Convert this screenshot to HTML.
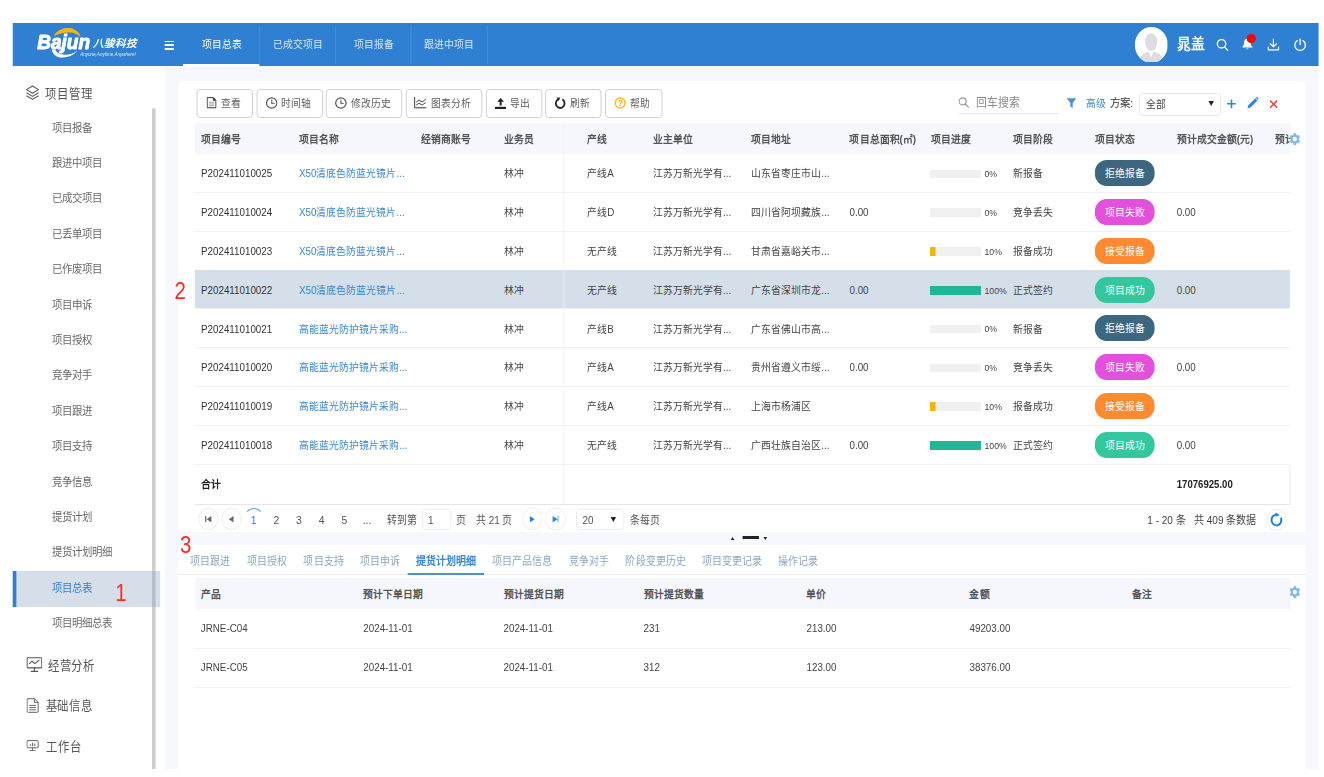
<!DOCTYPE html>
<html lang="zh-CN"><head><meta charset="utf-8"><title>项目总表</title><style>
*{box-sizing:border-box;margin:0;padding:0}
html,body{width:1324px;height:777px;overflow:hidden;background:#fff}
#root{position:absolute;left:0;top:0;width:1454.95px;height:777px;transform:scaleX(0.91);transform-origin:0 0;font-family:"Liberation Sans",sans-serif;font-size:10.77px;color:#333}

.a{position:absolute}
.t{position:absolute;white-space:nowrap;line-height:14px;height:14px;margin-top:-7px}
.b{font-weight:bold}
.hd{left:14.29px;top:23px;width:1435.16px;height:43px;background:#2f80d3}
.sb{left:14.29px;top:66px;width:167.03px;height:703px;background:#fff}
.mainbg{left:181.32px;top:66px;width:1268.13px;height:703px;background:#f6f8fd}
.card1{left:196.15px;top:80.5px;width:1239.01px;height:451.2px;background:#fff;border-radius:6px 6px 0 0}
.card2{left:196.15px;top:545px;width:1239.01px;height:224px;background:#fff}
.btn{position:absolute;top:89px;height:29px;border:1px solid #cfcfcf;border-radius:4px;background:#fff}
.th{color:#555;font-weight:bold}
.lnk{color:#3a86d0}
.hline{position:absolute;height:1px;background:#f0f1f4}
.badge{position:absolute;left:1203.3px;width:65.27px;height:26px;border-radius:13px;color:#fff;text-align:center;line-height:26px;font-size:10.77px}
.pbar{position:absolute;left:1022.42px;width:55.16px;height:8.6px;background:#f0f0f0}
.pfill{position:absolute;left:0;top:0;height:100%}
.circ{position:absolute;width:22.42px;height:22.6px;border-radius:50%;border:1px solid #efefef;background:#fff}
.mi{color:#686868;font-size:11.43px}
.mh{color:#555;font-size:12.53px}
.tab2{color:#8ea6c2;font-size:10.99px}
.red{color:#ff2a22;font-size:24.18px;line-height:24px;height:24px;margin-top:-11.5px;transform:translateX(-50%) scaleX(.93)}
</style></head>
<body>
<div id="root">
<div class="a hd"></div>
<div class="a sb"></div>
<div class="a mainbg"></div>
<div class="a card1"></div>
<div class="a card2"></div>
<svg class="a" preserveAspectRatio="none" style="left:32.97px;top:25px" width="131.87" height="40" viewBox="0 0 120 40">
<path d="M23.6 11 C27.5 4.2 34 2.6 39 3 C45.5 3.6 49.6 7.4 50.6 12.2 C47.6 8.6 43.4 7.2 38.6 7.4 C32.6 7.6 27.4 9 23.6 11 Z" fill="#f5b70c"/>
<path d="M21.8 24.6 C22.6 30.4 27.6 33 33 32.6 C39.4 32.2 44.6 29.4 47.4 25.8 C43.6 28.6 39 30 34.6 29.8 C30 29.6 26.6 27.8 25.2 24.6 Z" fill="#fff"/>
<text x="7.2" y="23.6" font-family="Liberation Sans, sans-serif" font-size="20.4" font-weight="bold" font-style="italic" fill="#fff" stroke="#fff" stroke-width="1" stroke-linejoin="round" textLength="52.8" lengthAdjust="spacingAndGlyphs">Bajun</text>
<text x="62.8" y="22.4" font-family="Liberation Sans, sans-serif" font-size="10.6" font-weight="normal" font-style="italic" fill="#fff" stroke="#fff" stroke-width=".35" textLength="44.4" lengthAdjust="spacingAndGlyphs">八骏科技</text>
<text x="50.3" y="31.3" font-family="Liberation Sans, sans-serif" font-size="4.9" font-style="italic" fill="#dcebfa" textLength="55.4" lengthAdjust="spacingAndGlyphs">Anyone,Anytime,Anywhere!</text>
</svg>
<div class="a" style="left:180.55px;top:40.6px;width:10.44px;height:1.4px;background:#fff"></div>
<div class="a" style="left:180.55px;top:44.4px;width:10.44px;height:1.4px;background:#fff"></div>
<div class="a" style="left:180.55px;top:48.2px;width:10.44px;height:1.4px;background:#fff"></div>
<div class="t " style="left:221.65px;top:44.4px;color:rgba(255,255,255,1);font-size:10.77px">项目总表</div>
<div class="t " style="left:299.67px;top:44.4px;color:rgba(255,255,255,0.82);font-size:10.77px">已成交项目</div>
<div class="t " style="left:388.68px;top:44.4px;color:rgba(255,255,255,0.82);font-size:10.77px">项目报备</div>
<div class="t " style="left:465.6px;top:44.4px;color:rgba(255,255,255,0.82);font-size:10.77px">跟进中项目</div>
<div class="a" style="left:284.62px;top:25px;width:1.1px;height:39px;background:rgba(255,255,255,.12)"></div>
<div class="a" style="left:368.13px;top:25px;width:1.1px;height:39px;background:rgba(255,255,255,.12)"></div>
<div class="a" style="left:451.1px;top:25px;width:1.1px;height:39px;background:rgba(255,255,255,.12)"></div>
<div class="a" style="left:534.62px;top:25px;width:1.1px;height:39px;background:rgba(255,255,255,.12)"></div>
<div class="a" style="left:201.1px;top:63.8px;width:83.52px;height:2.2px;background:#fff"></div>
<svg class="a" preserveAspectRatio="none" style="left:1247.03px;top:26.5px" width="36.48" height="35.8" viewBox="0 0 33.2 35.8">
<defs><clipPath id="av"><ellipse cx="16.6" cy="17.9" rx="16.6" ry="17.9"/></clipPath></defs>
<ellipse cx="16.6" cy="17.9" rx="16.6" ry="17.9" fill="#fff"/>
<g clip-path="url(#av)" fill="#dcdce1">
<ellipse cx="16.4" cy="15" rx="6.1" ry="8.8"/>
<path d="M4.6 36 C4.8 28 9 26.4 13.6 24.6 L16.3 30.6 L19 24.6 C23.8 26.4 28.6 28 29 36 Z"/>
</g></svg>
<div class="t " style="left:1293.41px;top:44.4px;color:#fff;-webkit-text-stroke:0.35px #fff;font-size:15.16px;line-height:18px;height:18px;margin-top:-9px">晁盖</div>
<svg class="a" preserveAspectRatio="none" style="left:1336.26px;top:38px" width="15.38" height="14" viewBox="0 0 14 14" fill="none" stroke="#fff" stroke-width="1.3" stroke-linecap="round"><circle cx="5.8" cy="5.8" r="4.2"/><path d="M9 9 L12 12.4"/></svg>
<svg class="a" preserveAspectRatio="none" style="left:1362.64px;top:36px" width="17.58" height="16" viewBox="0 0 16 16"><path d="M7 2.6 C4.6 2.9 3.6 4.8 3.6 7 C3.6 9.3 2.8 10.2 2 10.9 L2 11.6 L12 11.6 L12 10.9 C11.2 10.2 10.4 9.3 10.4 7 C10.4 4.8 9.4 2.9 7 2.6 Z" fill="#fff"/><path d="M5.8 12.4 a1.25 1.25 0 0 0 2.4 0 Z" fill="#fff"/></svg>
<div class="a" style="left:1370.33px;top:34.2px;width:9.45px;height:8.6px;border-radius:50%;background:#ff0000"></div>
<svg class="a" preserveAspectRatio="none" style="left:1391.76px;top:37.5px" width="15.38" height="14" viewBox="0 0 14 14" fill="none" stroke="#fff" stroke-width="1.2" stroke-linecap="round" stroke-linejoin="round"><path d="M6.7 1 L6.7 8.6 M3.6 5.8 L6.7 8.8 L9.8 5.8"/><path d="M1.6 9.2 L1.6 11.8 L11.8 11.8 L11.8 9.2"/></svg>
<svg class="a" preserveAspectRatio="none" style="left:1420.88px;top:37.5px" width="15.38" height="14" viewBox="0 0 14 14" fill="none" stroke="#fff" stroke-width="1.3" stroke-linecap="round"><path d="M4.2 2.6 A5.3 5.3 0 1 0 9.8 2.6"/><path d="M7 1.2 L7 6.6"/></svg>
<div class="a" style="left:167.03px;top:107.6px;width:3.74px;height:661.4px;background:#cdcdcd;border-radius:2px 2px 0 0"></div>
<div class="a" style="left:14.29px;top:571.2px;width:161.87px;height:35.8px;background:rgba(140,165,195,.36)"></div>
<div class="a" style="left:14.29px;top:571.2px;width:3.52px;height:35.8px;background:#2f80d3"></div>
<svg class="a" preserveAspectRatio="none" style="left:28.02px;top:85px" width="15.38" height="16" viewBox="0 0 14 16" fill="none" stroke="#555" stroke-width="1.1" stroke-linejoin="round"><path d="M7 1 L13 4.6 L7 8.2 L1 4.6 Z"/><path d="M1 7.8 L7 11.4 L13 7.8"/><path d="M1 10.8 L7 14.4 L13 10.8"/></svg>
<div class="t mh" style="left:49.67px;top:94.2px;">项目管理</div>
<div class="t mi" style="left:56.92px;top:127.6px;">项目报备</div>
<div class="t mi" style="left:56.92px;top:163.0px;">跟进中项目</div>
<div class="t mi" style="left:56.92px;top:198.39999999999998px;">已成交项目</div>
<div class="t mi" style="left:56.92px;top:233.79999999999998px;">已丢单项目</div>
<div class="t mi" style="left:56.92px;top:269.2px;">已作废项目</div>
<div class="t mi" style="left:56.92px;top:304.6px;">项目申诉</div>
<div class="t mi" style="left:56.92px;top:340.0px;">项目授权</div>
<div class="t mi" style="left:56.92px;top:375.4px;">竞争对手</div>
<div class="t mi" style="left:56.92px;top:410.79999999999995px;">项目跟进</div>
<div class="t mi" style="left:56.92px;top:446.19999999999993px;">项目支持</div>
<div class="t mi" style="left:56.92px;top:481.6px;">竞争信息</div>
<div class="t mi" style="left:56.92px;top:517.0px;">提货计划</div>
<div class="t mi" style="left:56.92px;top:552.4px;">提货计划明细</div>
<div class="t mi" style="left:56.92px;top:587.8px;color:#2f80d3">项目总表</div>
<div class="t mi" style="left:56.92px;top:623.1999999999999px;">项目明细总表</div>
<svg class="a" preserveAspectRatio="none" style="left:28.57px;top:656.5px" width="17.58" height="15.5" viewBox="0 0 16 15.5" fill="none" stroke="#555" stroke-width="1.1" stroke-linejoin="round" stroke-linecap="round"><rect x="0.7" y="0.7" width="14.6" height="10.2" rx="0.8"/><path d="M3.2 6.6 L5.6 4.2 L8.6 6.6 L12.6 3.2"/><path d="M8 11 L8 14 M4.8 14.4 L11.2 14.4"/></svg>
<div class="t mh" style="left:52.53px;top:665.9px;">经营分析</div>
<svg class="a" preserveAspectRatio="none" style="left:28.79px;top:697.5px" width="13.74" height="15" viewBox="0 0 12.5 15" fill="none" stroke="#666" stroke-width="1" stroke-linejoin="round" stroke-linecap="round"><path d="M1.8 0.7 L8 0.7 L11.8 4.4 L11.8 13.2 Q11.8 14.3 10.7 14.3 L1.8 14.3 Q0.7 14.3 0.7 13.2 L0.7 1.8 Q0.7 0.7 1.8 0.7 Z"/><path d="M8 0.9 L8 4.4 L11.6 4.4"/><path d="M3.3 7.4 L9.2 7.4 M3.3 9.6 L9.2 9.6 M3.3 11.8 L9.2 11.8"/></svg>
<div class="t mh" style="left:50.11px;top:706px;">基础信息</div>
<svg class="a" preserveAspectRatio="none" style="left:29.12px;top:739.8px" width="13.63" height="11.4" viewBox="0 0 12.4 11.4" fill="none" stroke="#666" stroke-width="1" stroke-linejoin="round" stroke-linecap="round"><rect x="0.6" y="0.6" width="11.2" height="7.2" rx="0.8"/><path d="M4 5.8 L4 4.6 M6.2 5.8 L6.2 3 M8.4 5.8 L8.4 4"/><path d="M6.2 8 L6.2 10.2 M3.6 10.7 L8.8 10.7"/></svg>
<div class="t mh" style="left:50.66px;top:747.2px;">工作台</div>
<div class="btn" style="left:216.37px;width:61.54px"></div>
<div class="btn" style="left:281.54px;width:73.08px"></div>
<div class="btn" style="left:358.24px;width:83.52px"></div>
<div class="btn" style="left:446.15px;width:83.74px"></div>
<div class="btn" style="left:533.63px;width:62.09px"></div>
<div class="btn" style="left:599.34px;width:62.09px"></div>
<div class="btn" style="left:665.16px;width:62.42px"></div>
<svg class="a" preserveAspectRatio="none" style="left:227.25px;top:97.4px" width="10.99" height="11.4" viewBox="0 0 10 11.4" fill="none" stroke="#333" stroke-width="1" stroke-linejoin="round"><path d="M0.6 0.6 L6.6 0.6 L9.4 3.4 L9.4 10.8 L0.6 10.8 Z"/><path d="M6.6 0.6 L9.4 3.4 L6.6 3.4 Z" fill="#333" stroke-width=".5"/><path d="M2.4 5.2 L7.6 5.2 M2.4 7 L7.6 7 M2.4 8.8 L7.6 8.8" stroke="#888" stroke-width=".8"/></svg>
<div class="t " style="left:243.08px;top:103.2px;color:#606060;font-size:10.77px">查看</div>
<svg class="a" preserveAspectRatio="none" style="left:291.87px;top:97.2px" width="13.19" height="12" viewBox="0 0 12 12" fill="none" stroke="#555" stroke-width="1.25" stroke-linecap="round"><circle cx="6" cy="6" r="5.2"/><path d="M6 3.2 L6 6.4 L8.4 6.4" stroke="#777"/></svg>
<div class="t " style="left:308.79px;top:103.2px;color:#606060;font-size:10.77px">时间轴</div>
<svg class="a" preserveAspectRatio="none" style="left:368.35px;top:97.2px" width="13.19" height="12" viewBox="0 0 12 12" fill="none" stroke="#555" stroke-width="1.25" stroke-linecap="round"><circle cx="6" cy="6" r="5.2"/><path d="M6 3.2 L6 6.4 L8.4 6.4" stroke="#777"/></svg>
<div class="t " style="left:386.04px;top:103.2px;color:#606060;font-size:10.77px">修改历史</div>
<svg class="a" preserveAspectRatio="none" style="left:455.49px;top:97.4px" width="13.63" height="11.4" viewBox="0 0 12.4 11.4" fill="none" stroke="#333" stroke-width="1" stroke-linecap="round" stroke-linejoin="round"><path d="M0.6 0.4 L0.6 10.8 L12 10.8"/><path d="M2.4 5 L5 3 L8 5 L11.4 2.6" stroke-width=".9"/><path d="M2.4 8 L5 6.2 L8 8 L11.4 5.8" stroke-width=".9"/></svg>
<div class="t " style="left:473.63px;top:103.2px;color:#606060;font-size:10.77px">图表分析</div>
<svg class="a" preserveAspectRatio="none" style="left:543.52px;top:97px" width="12.75" height="12.4" viewBox="0 0 11.6 12.4"><path d="M5.6 1 L9 4.8 L6.6 4.8 L6.6 8.4 L4.6 8.4 L4.6 4.8 L2.2 4.8 Z" fill="#222"/><rect x="0" y="9.8" width="11.4" height="2.3" fill="#222"/></svg>
<div class="t " style="left:560.44px;top:103.2px;color:#606060;font-size:10.77px">导出</div>
<svg class="a" preserveAspectRatio="none" style="left:609.34px;top:97px" width="13.19" height="12.2" viewBox="0 0 13 13" fill="none" stroke="#2a2a2a" stroke-width="2"><path d="M4.6 2.3 A4.7 4.9 0 1 0 8.8 2.5"/><path d="M2.6 0.4 L6.6 0.5 L5 4.2 Z" fill="#2a2a2a" stroke="none"/></svg>
<div class="t " style="left:626.7px;top:103.2px;color:#606060;font-size:10.77px">刷新</div>
<svg class="a" preserveAspectRatio="none" style="left:674.51px;top:97.2px" width="13.19" height="12" viewBox="0 0 12 12"><circle cx="6" cy="6" r="5" fill="#fffbe8" stroke="#f5bd2a" stroke-width="1.4"/><text x="6" y="9.1" text-anchor="middle" font-family="Liberation Sans, sans-serif" font-weight="bold" font-size="8.6" fill="#f0b010">?</text></svg>
<div class="t " style="left:692.75px;top:103.2px;color:#606060;font-size:10.77px">帮助</div>
<svg class="a" preserveAspectRatio="none" style="left:1053.41px;top:97.2px" width="12.09" height="11" viewBox="0 0 11 11" fill="none" stroke="#999" stroke-width="1.1" stroke-linecap="round"><circle cx="4.4" cy="4.4" r="3.5"/><path d="M7 7 L10.2 10.2"/></svg>
<div class="t " style="left:1072.86px;top:103px;color:#8a8a8a;font-size:11.98px">回车搜索</div>
<div class="a" style="left:1052.75px;top:113px;width:111.54px;height:1px;background:#e6e8ee"></div>
<svg class="a" preserveAspectRatio="none" style="left:1171.98px;top:98px" width="10.99" height="10.6" viewBox="0 0 10 10.6"><path d="M0.2 0.3 L9.8 0.3 L6.2 4.9 L6.2 10 L3.8 8.6 L3.8 4.9 Z" fill="#4a92dc"/></svg>
<div class="t " style="left:1192.97px;top:103.2px;color:#3a86d0;font-size:10.77px">高级</div>
<div class="t " style="left:1220px;top:103.2px;color:#333;font-size:11.43px">方案:</div>
<div class="a" style="left:1252.2px;top:93px;width:89.89px;height:22.8px;border:1px solid #e4e6ea;border-radius:4px;background:#fff"></div>
<div class="t " style="left:1259.89px;top:103.6px;color:#444;font-size:10.77px">全部</div>
<div class="a" style="left:1327.91px;top:101.2px;width:0;height:0;border-left:3.3px solid transparent;border-right:3.3px solid transparent;border-top:5px solid #222"></div>
<svg class="a" preserveAspectRatio="none" style="left:1348.35px;top:99px" width="10.55" height="9.6" viewBox="0 0 9.6 9.6" stroke="#2f86e0" stroke-width="1.6"><path d="M4.8 0.4 L4.8 9.2 M0.4 4.8 L9.2 4.8"/></svg>
<svg class="a" preserveAspectRatio="none" style="left:1369.67px;top:97.4px" width="13.19" height="12" viewBox="0 0 12 12"><path d="M0.8 11.2 L1.6 8.2 L8.6 1.2 L10.8 3.4 L3.8 10.4 Z" fill="#2f86e0"/><path d="M9.2 0.7 L9.9 0.1 Q10.4 -0.2 10.9 0.3 L11.7 1.1 Q12.2 1.6 11.8 2.1 L11.3 2.8 Z" fill="#2f86e0"/></svg>
<svg class="a" preserveAspectRatio="none" style="left:1394.51px;top:99.6px" width="9.23" height="8.4" viewBox="0 0 8.4 8.4" stroke="#f0403c" stroke-width="1.5"><path d="M0.6 0.6 L7.8 7.8 M7.8 0.6 L0.6 7.8"/></svg>
<div class="a" style="left:214.29px;top:123.4px;width:1203.3px;height:30.19999999999999px;background:#f5f7fc"></div>
<div class="t th" style="left:220.88px;top:139.3px;">项目编号</div>
<div class="t th" style="left:328.57px;top:139.3px;">项目名称</div>
<div class="t th" style="left:463.08px;top:139.3px;">经销商账号</div>
<div class="t th" style="left:553.41px;top:139.3px;">业务员</div>
<div class="t th" style="left:645.38px;top:139.3px;">产线</div>
<div class="t th" style="left:717.58px;top:139.3px;">业主单位</div>
<div class="t th" style="left:825.49px;top:139.3px;">项目地址</div>
<div class="t th" style="left:933.52px;top:139.3px;">项目总面积(㎡)</div>
<div class="t th" style="left:1023.08px;top:139.3px;">项目进度</div>
<div class="t th" style="left:1113.19px;top:139.3px;">项目阶段</div>
<div class="t th" style="left:1203.08px;top:139.3px;">项目状态</div>
<div class="t th" style="left:1293.08px;top:139.3px;">预计成交金额(元)</div>
<div class="a" style="left:1400.88px;top:123.4px;width:16.7px;height:30.19999999999999px;overflow:hidden"><div class="t th" style="left:0;top:15.900000000000006px">预计成交时间</div></div>
<svg class="a" preserveAspectRatio="none" style="left:1416.04px;top:131.6px" width="13.85" height="14.2" viewBox="0 0 24 24"><path fill="#80b6eb" d="M19.4 13c.04-.33.06-.66.06-1s-.02-.67-.07-1l2.1-1.65c.2-.15.25-.42.13-.64l-2-3.46c-.12-.22-.4-.3-.6-.22l-2.5 1c-.52-.4-1.08-.73-1.7-.98l-.37-2.65A.49.49 0 0 0 14 2h-4c-.25 0-.46.18-.5.42l-.37 2.65c-.6.25-1.17.6-1.7.98l-2.48-1c-.23-.1-.5 0-.6.22l-2 3.46c-.14.22-.08.5.1.64L4.57 11c-.04.33-.07.66-.07 1s.03.67.07 1l-2.1 1.65c-.2.15-.25.42-.13.64l2 3.46c.12.22.4.3.6.22l2.5-1c.52.4 1.08.73 1.7.98l.37 2.65c.04.24.25.42.5.42h4c.25 0 .46-.18.5-.42l.37-2.65c.6-.25 1.17-.6 1.7-.98l2.48 1c.23.1.5 0 .6-.22l2-3.46c.12-.22.07-.5-.12-.64L19.4 13zM12 16a4 4 0 1 1 0-8 4 4 0 0 1 0 8z"/></svg>
<div class="t " style="left:220.88px;top:173.4px;color:#333">P202411010025</div>
<div class="t lnk" style="left:328.57px;top:173.4px;">X50清底色防蓝光镜片...</div>
<div class="t " style="left:553.41px;top:173.4px;color:#444">林冲</div>
<div class="t " style="left:645.38px;top:173.4px;color:#444">产线A</div>
<div class="t " style="left:717.58px;top:173.4px;color:#444">江苏万新光学有...</div>
<div class="t " style="left:825.49px;top:173.4px;color:#444">山东省枣庄市山...</div>
<div class="pbar" style="top:169.6px"></div>
<div class="t " style="left:1081.87px;top:174.20000000000002px;color:#444;font-size:9.56px">0%</div>
<div class="t " style="left:1113.19px;top:173.4px;color:#444">新报备</div>
<div class="badge" style="top:160.20000000000002px;background:#3d6781">拒绝报备</div>
<div class="hline" style="left:214.29px;top:191.89999999999998px;width:1203.3px"></div>
<div class="t " style="left:220.88px;top:212.2px;color:#333">P202411010024</div>
<div class="t lnk" style="left:328.57px;top:212.2px;">X50清底色防蓝光镜片...</div>
<div class="t " style="left:553.41px;top:212.2px;color:#444">林冲</div>
<div class="t " style="left:645.38px;top:212.2px;color:#444">产线D</div>
<div class="t " style="left:717.58px;top:212.2px;color:#444">江苏万新光学有...</div>
<div class="t " style="left:825.49px;top:212.2px;color:#444">四川省阿坝藏族...</div>
<div class="t " style="left:933.52px;top:212.2px;color:#444">0.00</div>
<div class="pbar" style="top:208.39999999999998px"></div>
<div class="t " style="left:1081.87px;top:213.0px;color:#444;font-size:9.56px">0%</div>
<div class="t " style="left:1113.19px;top:212.2px;color:#444">竞争丢失</div>
<div class="badge" style="top:199.0px;background:#e350dc">项目失败</div>
<div class="t " style="left:1293.08px;top:212.2px;color:#444">0.00</div>
<div class="hline" style="left:214.29px;top:230.7px;width:1203.3px"></div>
<div class="t " style="left:220.88px;top:251.0px;color:#333">P202411010023</div>
<div class="t lnk" style="left:328.57px;top:251.0px;">X50清底色防蓝光镜片...</div>
<div class="t " style="left:553.41px;top:251.0px;color:#444">林冲</div>
<div class="t " style="left:645.38px;top:251.0px;color:#444">无产线</div>
<div class="t " style="left:717.58px;top:251.0px;color:#444">江苏万新光学有...</div>
<div class="t " style="left:825.49px;top:251.0px;color:#444">甘肃省嘉峪关市...</div>
<div class="pbar" style="top:247.2px"><div class="pfill" style="width:5.93px;background:#f5b400"></div></div>
<div class="t " style="left:1081.87px;top:251.8px;color:#444;font-size:9.56px">10%</div>
<div class="t " style="left:1113.19px;top:251.0px;color:#444">报备成功</div>
<div class="badge" style="top:237.8px;background:#ff8a30">接受报备</div>
<div class="hline" style="left:214.29px;top:269.5px;width:1203.3px"></div>
<div class="a" style="left:214.29px;top:270.0px;width:1203.3px;height:38.8px;background:#d5dfe9"></div>
<div class="t " style="left:220.88px;top:289.79999999999995px;color:#333">P202411010022</div>
<div class="t lnk" style="left:328.57px;top:289.79999999999995px;">X50清底色防蓝光镜片...</div>
<div class="t " style="left:553.41px;top:289.79999999999995px;color:#444">林冲</div>
<div class="t " style="left:645.38px;top:289.79999999999995px;color:#444">无产线</div>
<div class="t " style="left:717.58px;top:289.79999999999995px;color:#444">江苏万新光学有...</div>
<div class="t " style="left:825.49px;top:289.79999999999995px;color:#444">广东省深圳市龙...</div>
<div class="t " style="left:933.52px;top:289.79999999999995px;color:#444">0.00</div>
<div class="pbar" style="top:285.99999999999994px"><div class="pfill" style="width:100%;background:#1fb795"></div></div>
<div class="t " style="left:1081.87px;top:290.59999999999997px;color:#444;font-size:9.56px">100%</div>
<div class="t " style="left:1113.19px;top:289.79999999999995px;color:#444">正式签约</div>
<div class="badge" style="top:276.59999999999997px;background:#32c79c">项目成功</div>
<div class="t " style="left:1293.08px;top:289.79999999999995px;color:#444">0.00</div>
<div class="hline" style="left:214.29px;top:308.3px;width:1203.3px"></div>
<div class="t " style="left:220.88px;top:328.5999999999999px;color:#333">P202411010021</div>
<div class="t lnk" style="left:328.57px;top:328.5999999999999px;">高能蓝光防护镜片采购...</div>
<div class="t " style="left:553.41px;top:328.5999999999999px;color:#444">林冲</div>
<div class="t " style="left:645.38px;top:328.5999999999999px;color:#444">产线B</div>
<div class="t " style="left:717.58px;top:328.5999999999999px;color:#444">江苏万新光学有...</div>
<div class="t " style="left:825.49px;top:328.5999999999999px;color:#444">广东省佛山市高...</div>
<div class="pbar" style="top:324.7999999999999px"></div>
<div class="t " style="left:1081.87px;top:329.3999999999999px;color:#444;font-size:9.56px">0%</div>
<div class="t " style="left:1113.19px;top:328.5999999999999px;color:#444">新报备</div>
<div class="badge" style="top:315.3999999999999px;background:#3d6781">拒绝报备</div>
<div class="hline" style="left:214.29px;top:347.09999999999997px;width:1203.3px"></div>
<div class="t " style="left:220.88px;top:367.4px;color:#333">P202411010020</div>
<div class="t lnk" style="left:328.57px;top:367.4px;">高能蓝光防护镜片采购...</div>
<div class="t " style="left:553.41px;top:367.4px;color:#444">林冲</div>
<div class="t " style="left:645.38px;top:367.4px;color:#444">产线A</div>
<div class="t " style="left:717.58px;top:367.4px;color:#444">江苏万新光学有...</div>
<div class="t " style="left:825.49px;top:367.4px;color:#444">贵州省遵义市绥...</div>
<div class="t " style="left:933.52px;top:367.4px;color:#444">0.00</div>
<div class="pbar" style="top:363.59999999999997px"></div>
<div class="t " style="left:1081.87px;top:368.2px;color:#444;font-size:9.56px">0%</div>
<div class="t " style="left:1113.19px;top:367.4px;color:#444">竞争丢失</div>
<div class="badge" style="top:354.2px;background:#e350dc">项目失败</div>
<div class="t " style="left:1293.08px;top:367.4px;color:#444">0.00</div>
<div class="hline" style="left:214.29px;top:385.90000000000003px;width:1203.3px"></div>
<div class="t " style="left:220.88px;top:406.19999999999993px;color:#333">P202411010019</div>
<div class="t lnk" style="left:328.57px;top:406.19999999999993px;">高能蓝光防护镜片采购...</div>
<div class="t " style="left:553.41px;top:406.19999999999993px;color:#444">林冲</div>
<div class="t " style="left:645.38px;top:406.19999999999993px;color:#444">产线A</div>
<div class="t " style="left:717.58px;top:406.19999999999993px;color:#444">江苏万新光学有...</div>
<div class="t " style="left:825.49px;top:406.19999999999993px;color:#444">上海市杨浦区</div>
<div class="pbar" style="top:402.3999999999999px"><div class="pfill" style="width:5.93px;background:#f5b400"></div></div>
<div class="t " style="left:1081.87px;top:406.99999999999994px;color:#444;font-size:9.56px">10%</div>
<div class="t " style="left:1113.19px;top:406.19999999999993px;color:#444">报备成功</div>
<div class="badge" style="top:392.99999999999994px;background:#ff8a30">接受报备</div>
<div class="hline" style="left:214.29px;top:424.7px;width:1203.3px"></div>
<div class="t " style="left:220.88px;top:444.9999999999999px;color:#333">P202411010018</div>
<div class="t lnk" style="left:328.57px;top:444.9999999999999px;">高能蓝光防护镜片采购...</div>
<div class="t " style="left:553.41px;top:444.9999999999999px;color:#444">林冲</div>
<div class="t " style="left:645.38px;top:444.9999999999999px;color:#444">无产线</div>
<div class="t " style="left:717.58px;top:444.9999999999999px;color:#444">江苏万新光学有...</div>
<div class="t " style="left:825.49px;top:444.9999999999999px;color:#444">广西壮族自治区...</div>
<div class="t " style="left:933.52px;top:444.9999999999999px;color:#444">0.00</div>
<div class="pbar" style="top:441.1999999999999px"><div class="pfill" style="width:100%;background:#1fb795"></div></div>
<div class="t " style="left:1081.87px;top:445.7999999999999px;color:#444;font-size:9.56px">100%</div>
<div class="t " style="left:1113.19px;top:444.9999999999999px;color:#444">正式签约</div>
<div class="badge" style="top:431.7999999999999px;background:#32c79c">项目成功</div>
<div class="t " style="left:1293.08px;top:444.9999999999999px;color:#444">0.00</div>
<div class="hline" style="left:214.29px;top:463.49999999999994px;width:1203.3px"></div>
<div class="a" style="left:618.68px;top:123.4px;width:1.1px;height:380.6px;background:#f0f1f4"></div>
<div class="t b" style="left:220.88px;top:484.4px;color:#222">合计</div>
<div class="t b" style="left:1293.08px;top:484.4px;color:#222;font-size:10.55px">17076925.00</div>
<div class="hline" style="left:214.29px;top:503.8px;width:1203.3px;background:#e4e6ea"></div>
<div class="a" style="left:1416.92px;top:464.5px;width:1.1px;height:39.5px;background:#e4e6ea"></div>
<div class="circ" style="left:217.69px;top:507.90000000000003px"></div>
<div class="circ" style="left:242.86px;top:507.90000000000003px"></div>
<div class="circ" style="left:573.63px;top:507.90000000000003px"></div>
<div class="circ" style="left:599.12px;top:507.90000000000003px"></div>
<svg class="a" preserveAspectRatio="none" style="left:225.16px;top:516.0px" width="7.69" height="6.4" viewBox="0 0 7 6.4"><rect x="0.3" y="0" width="1.2" height="6.4" fill="#666"/><path d="M6.6 0 L6.6 6.4 L1.9 3.2 Z" fill="#666"/></svg>
<svg class="a" preserveAspectRatio="none" style="left:250.77px;top:516.0px" width="5.93" height="6.4" viewBox="0 0 5.4 6.4"><path d="M5.2 0 L5.2 6.4 L0.4 3.2 Z" fill="#666"/></svg>
<svg class="a" preserveAspectRatio="none" style="left:582.2px;top:515.6px" width="5.93" height="6.4" viewBox="0 0 5.4 6.4"><path d="M0.2 0 L0.2 6.4 L5 3.2 Z" fill="#1f7fd6"/></svg>
<svg class="a" preserveAspectRatio="none" style="left:606.59px;top:515.6px" width="7.69" height="6.4" viewBox="0 0 7 6.4"><path d="M0.4 0 L0.4 6.4 L5.1 3.2 Z" fill="#1f7fd6"/><rect x="5.5" y="0" width="1.2" height="6.4" fill="#1f7fd6"/></svg>
<div class="a" style="left:267.69px;top:507.6px;width:22.42px;height:22.6px;border-radius:50%;border:1.2px solid transparent;border-top-color:#5a9fe0"></div>
<div class="t " style="left:278.68px;top:519.8000000000001px;font-size:11.43px;color:#2f80d3;transform:translateX(-50%)">1</div>
<div class="t " style="left:303.63px;top:519.8000000000001px;font-size:11.43px;color:#555;transform:translateX(-50%)">2</div>
<div class="t " style="left:328.57px;top:519.8000000000001px;font-size:11.43px;color:#555;transform:translateX(-50%)">3</div>
<div class="t " style="left:353.41px;top:519.8000000000001px;font-size:11.43px;color:#555;transform:translateX(-50%)">4</div>
<div class="t " style="left:378.35px;top:519.8000000000001px;font-size:11.43px;color:#555;transform:translateX(-50%)">5</div>
<div class="t " style="left:403.3px;top:519.8000000000001px;font-size:11.43px;color:#555;transform:translateX(-50%)">...</div>
<div class="t " style="left:425.6px;top:519.8000000000001px;font-size:10.88px;color:#555">转到第</div>
<div class="a" style="left:463.74px;top:508.6px;width:32.09px;height:21.4px;border:1px solid #ececf0;border-radius:4px;background:#fff"></div>
<div class="t " style="left:470.33px;top:519.8000000000001px;font-size:10.88px;color:#555">1</div>
<div class="t " style="left:501.65px;top:519.8000000000001px;font-size:10.88px;color:#555">页</div>
<div class="t " style="left:522.97px;top:519.8000000000001px;font-size:10.88px;color:#555">共 21 页</div>
<div class="a" style="left:632.97px;top:508.6px;width:53.52px;height:21.4px;border:1px solid #ececf0;border-radius:4px;background:#fff"></div>
<div class="t " style="left:640px;top:519.8000000000001px;font-size:10.88px;color:#555">20</div>
<div class="a" style="left:671.43px;top:517.0px;width:0;height:0;border-left:3.3px solid transparent;border-right:3.3px solid transparent;border-top:5px solid #222"></div>
<div class="t " style="left:692.31px;top:519.8000000000001px;font-size:10.88px;color:#555">条每页</div>
<div class="t " style="left:1315.93px;top:519.8000000000001px;font-size:10.99px;color:#444;transform:translateX(-100%);left:1380.55px">1 - 20 条&nbsp;&nbsp; 共 409 条数据</div>
<div class="circ" style="left:1392.09px;top:508.6px;width:21.76px;height:22px;border-color:#eef0f4"></div>
<svg class="a" preserveAspectRatio="none" style="left:1395.16px;top:511.90000000000003px" width="15.38" height="15" viewBox="0 0 14 15" fill="none" stroke="#1b7cc6" stroke-width="1.9"><path d="M11.44 5.72 A4.9 5.4 0 1 1 6.15 2.68"/><path d="M6 0.6 L6 4.7 L10.3 2.9 Z" fill="#1b7cc6" stroke="none"/></svg>
<div class="a" style="left:802.86px;top:537.2px;width:0;height:0;border-left:2.09px solid transparent;border-right:2.09px solid transparent;border-bottom:3px solid #222"></div>
<div class="a" style="left:815.6px;top:536.2px;width:18.02px;height:3.2px;background:#222"></div>
<div class="a" style="left:838.9px;top:537.2px;width:0;height:0;border-left:2.09px solid transparent;border-right:2.09px solid transparent;border-top:3px solid #222"></div>
<div class="t tab2" style="left:209.01px;top:560.8px;">项目跟进</div>
<div class="t tab2" style="left:271.43px;top:560.8px;">项目授权</div>
<div class="t tab2" style="left:333.52px;top:560.8px;">项目支持</div>
<div class="t tab2" style="left:395.6px;top:560.8px;">项目申诉</div>
<div class="t tab2 b" style="left:457.36px;top:560.8px;color:#3a88d8">提货计划明细</div>
<div class="t tab2" style="left:540.99px;top:560.8px;">项目产品信息</div>
<div class="t tab2" style="left:624.95px;top:560.8px;">竞争对手</div>
<div class="t tab2" style="left:687.36px;top:560.8px;">阶段变更历史</div>
<div class="t tab2" style="left:771.43px;top:560.8px;">项目变更记录</div>
<div class="t tab2" style="left:854.73px;top:560.8px;">操作记录</div>
<div class="a" style="left:196.15px;top:574px;width:1239.01px;height:1px;background:#ebedf0"></div>
<div class="a" style="left:448.02px;top:573.4px;width:83.96px;height:1.6px;background:#4a92dc"></div>
<div class="a" style="left:214.29px;top:578px;width:1203.3px;height:31px;background:#f5f7fc"></div>
<div class="t th" style="left:220.66px;top:593.8px;">产品</div>
<div class="t th" style="left:399.23px;top:593.8px;">预计下单日期</div>
<div class="t th" style="left:553.3px;top:593.8px;">预计提货日期</div>
<div class="t th" style="left:707.25px;top:593.8px;">预计提货数量</div>
<div class="t th" style="left:886.26px;top:593.8px;">单价</div>
<div class="t th" style="left:1065.38px;top:593.8px;">金额</div>
<div class="t th" style="left:1243.96px;top:593.8px;">备注</div>
<svg class="a" preserveAspectRatio="none" style="left:1415.6px;top:585.4px" width="13.85" height="14.2" viewBox="0 0 24 24"><path fill="#80b6eb" d="M19.4 13c.04-.33.06-.66.06-1s-.02-.67-.07-1l2.1-1.65c.2-.15.25-.42.13-.64l-2-3.46c-.12-.22-.4-.3-.6-.22l-2.5 1c-.52-.4-1.08-.73-1.7-.98l-.37-2.65A.49.49 0 0 0 14 2h-4c-.25 0-.46.18-.5.42l-.37 2.65c-.6.25-1.17.6-1.7.98l-2.48-1c-.23-.1-.5 0-.6.22l-2 3.46c-.14.22-.08.5.1.64L4.57 11c-.04.33-.07.66-.07 1s.03.67.07 1l-2.1 1.65c-.2.15-.25.42-.13.64l2 3.46c.12.22.4.3.6.22l2.5-1c.52.4 1.08.73 1.7.98l.37 2.65c.04.24.25.42.5.42h4c.25 0 .46-.18.5-.42l.37-2.65c.6-.25 1.17-.6 1.7-.98l2.48 1c.23.1.5 0 .6-.22l2-3.46c.12-.22.07-.5-.12-.64L19.4 13zM12 16a4 4 0 1 1 0-8 4 4 0 0 1 0 8z"/></svg>
<div class="t " style="left:220.66px;top:628.0px;color:#444">JRNE-C04</div>
<div class="t " style="left:399.23px;top:628.0px;color:#444">2024-11-01</div>
<div class="t " style="left:553.3px;top:628.0px;color:#444">2024-11-01</div>
<div class="t " style="left:707.25px;top:628.0px;color:#444">231</div>
<div class="t " style="left:886.26px;top:628.0px;color:#444">213.00</div>
<div class="t " style="left:1065.38px;top:628.0px;color:#444">49203.00</div>
<div class="hline" style="left:214.29px;top:647.6px;width:1203.3px"></div>
<div class="t " style="left:220.66px;top:666.9px;color:#444">JRNE-C05</div>
<div class="t " style="left:399.23px;top:666.9px;color:#444">2024-11-01</div>
<div class="t " style="left:553.3px;top:666.9px;color:#444">2024-11-01</div>
<div class="t " style="left:707.25px;top:666.9px;color:#444">312</div>
<div class="t " style="left:886.26px;top:666.9px;color:#444">123.00</div>
<div class="t " style="left:1065.38px;top:666.9px;color:#444">38376.00</div>
<div class="hline" style="left:214.29px;top:686.5px;width:1203.3px"></div>
<div class="t red" style="left:133.08px;top:592.9px;">1</div>
<div class="t red" style="left:198.24px;top:290px;">2</div>
<div class="t red" style="left:203.85px;top:544.3px;">3</div>
</div>
</body></html>
